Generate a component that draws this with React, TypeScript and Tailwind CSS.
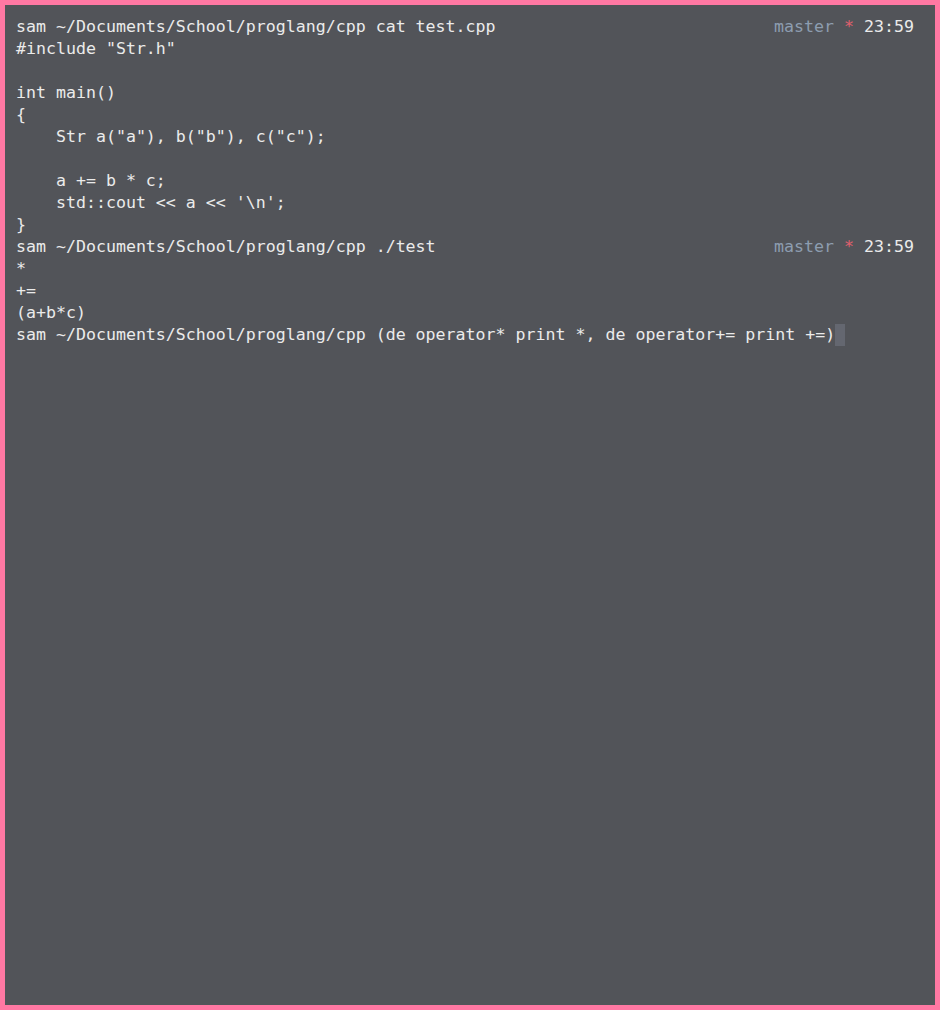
type Line = { text: string; right?: boolean; cursor?: boolean };

const lines: Line[] = [
  { text: 'sam ~/Documents/School/proglang/cpp cat test.cpp', right: true },
  { text: '#include "Str.h"' },
  { text: '' },
  { text: 'int main()' },
  { text: '{' },
  { text: '    Str a("a"), b("b"), c("c");' },
  { text: '' },
  { text: '    a += b * c;' },
  { text: "    std::cout << a << '\\n';" },
  { text: '}' },
  { text: 'sam ~/Documents/School/proglang/cpp ./test', right: true },
  { text: '*' },
  { text: '+=' },
  { text: '(a+b*c)' },
  {
    text: 'sam ~/Documents/School/proglang/cpp (de operator* print *, de operator+= print +=)',
    cursor: true,
  },
];

function RightPrompt() {
  return (
    <span>
      <span className="text-[#8d9db0]">master</span>{' '}
      <span className="text-[#e0606e]">*</span>{' '}
      <span>23:59</span>
    </span>
  );
}

export default function App() {
  return (
    <div className="w-[940px] h-[1010px] bg-[#ff78a3] p-[5px]">
      <div
        className="h-full bg-[#525459] pl-[11px] pt-[11px] text-[#ebebeb] text-[16.6px] leading-[22px] whitespace-pre"
        style={{ fontFamily: '"DejaVu Sans Mono", "Liberation Mono", monospace' }}
      >
        {lines.map((line, i) => (
          <div key={i} className="flex w-[898px] h-[22px] justify-between">
            <span className="flex">
              {line.text}
              {line.cursor && <span className="inline-block w-[10px] h-[22px] bg-[#646770]" />}
            </span>
            {line.right && <RightPrompt />}
          </div>
        ))}
      </div>
    </div>
  );
}
